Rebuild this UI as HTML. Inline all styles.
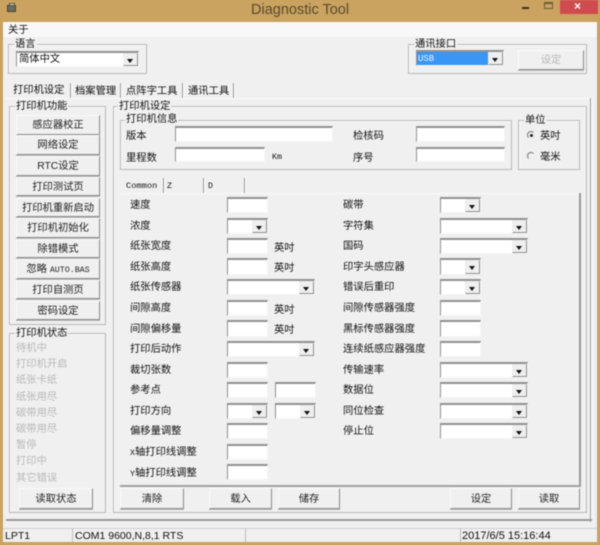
<!DOCTYPE html>
<html lang="zh"><head><meta charset="utf-8"><title>Diagnostic Tool</title>
<style>
html,body{margin:0;padding:0;width:600px;height:545px;overflow:hidden;background:#c9a35f}
#w{position:relative;width:600px;height:545px;overflow:hidden;filter:blur(.5px);font-family:"Liberation Sans","WenQuanYi Zen Hei","Noto Sans CJK SC",sans-serif;font-size:10.3px;color:#111}
#w div{position:absolute;box-sizing:border-box}
.t{white-space:nowrap;line-height:14px;height:14px;margin-top:1px}
.g{border:1px solid #b8b8b8;box-shadow:inset 1px 1px 0 #fafafa}
.l{background:#f0f0f0;padding:1px 1px 0;white-space:nowrap;line-height:14px;height:15px}
.b{background:#f0f0f0;border:1px solid;border-color:#fbfbfb #8a8a8a #8a8a8a #fbfbfb;text-align:center;box-shadow:0 1px 0 #b8b8b8;white-space:nowrap;color:#222;padding-top:2px}
.i{background:#fff;border-top:2px solid #909090;border-left:1px solid #909090;border-right:1px solid #f6f6f6;border-bottom:1px solid #f6f6f6}
.a{right:0;top:0;width:15px;height:100%;background:#efefef;border:1px solid;border-color:#eee #8f8f8f #8f8f8f #eee}
.a:after{content:"";position:absolute;left:3px;top:5px;border-left:3.5px solid transparent;border-right:3.5px solid transparent;border-top:4px solid #111}
#w .d{color:#b8b8b8}
.m{font-family:"Liberation Mono","WenQuanYi Zen Hei",monospace;font-size:8.3px}
.sp{width:2px;height:16px;background:linear-gradient(90deg,#999 50%,#fff 50%)}
</style></head><body><div id="w">
<div style="left:0;top:0;width:600px;height:545px;background:#c9a35f"></div>
<div style="left:3px;top:22px;width:594px;height:520px;background:#f0f0f0"></div>
<div style="left:3px;top:22px;width:594px;height:15px;background:#f8f8f8"></div>
<div class="t" style="left:251px;top:1px;font-size:14.5px;height:17px;line-height:17px;color:#5a4a30">Diagnostic Tool</div>
<div style="left:7px;top:5px;width:9px;height:7px;background:#6b6b60;border:1px solid #443"></div>
<div style="left:9px;top:3px;width:6px;height:3px;background:#ddd;border:1px solid #554"></div>
<div style="left:522px;top:7px;width:7px;height:2px;background:#3b3020"></div>
<div style="left:544px;top:2px;width:9px;height:7px;border:1px solid #6e5a38;border-top-width:2px"></div>
<div style="left:560px;top:0;width:38px;height:14px;background:#cf4b4f"></div>
<div class="t" style="left:574px;top:-2px;color:#fff;font-weight:bold;font-size:12px">×</div>
<div class="t" style="left:8px;top:23px">关于</div>

<div class="g" style="left:8px;top:44px;width:139px;height:30px"></div>
<div class="l" style="left:14px;top:37px">语言</div>
<div class="i" style="left:16px;top:51px;width:123px;height:16px"><div class="a"></div></div>
<div class="t" style="left:19px;top:52px">简体中文</div>

<div class="g" style="left:408px;top:44px;width:179px;height:30px"></div>
<div class="l" style="left:414px;top:37px">通讯接口</div>
<div class="i" style="left:416px;top:50px;width:88px;height:16px;background:#3a96f5"><div class="a"></div></div>
<div class="t m" style="left:418px;top:51px;color:#e8f3ff;font-size:9px">USB</div>
<div class="b d" style="left:518px;top:50px;width:66px;height:20px;line-height:16px">设定</div>

<div class="t" style="left:13px;top:83px">打印机设定</div>
<div class="sp" style="left:70px;top:83px"></div>
<div class="t" style="left:75px;top:84px">档案管理</div>
<div class="sp" style="left:120px;top:83px"></div>
<div class="t" style="left:126px;top:84px">点阵字工具</div>
<div class="sp" style="left:182px;top:83px"></div>
<div class="t" style="left:188px;top:84px">通讯工具</div>
<div class="sp" style="left:233px;top:83px"></div>

<div style="left:590px;top:98px;width:2px;height:424px;background:linear-gradient(90deg,#999 50%,#fff 50%)"></div>
<div style="left:6px;top:519px;width:586px;height:2px;background:#999"></div>
<div style="left:6px;top:98px;width:584px;height:1px;background:#fbfbfb"></div>

<div class="g" style="left:9px;top:106px;width:97px;height:219px"></div>
<div class="l" style="left:15px;top:99px">打印机功能</div>
<div class="b" style="left:16px;top:115px;width:84px;height:20px;line-height:16px">感应器校正</div>
<div class="b" style="left:16px;top:135px;width:84px;height:20px;line-height:16px">网络设定</div>
<div class="b" style="left:16px;top:156px;width:84px;height:20px;line-height:16px">RTC设定</div>
<div class="b" style="left:16px;top:177px;width:84px;height:19px;line-height:15px">打印测试页</div>
<div class="b" style="left:16px;top:198px;width:84px;height:19px;line-height:15px">打印机重新启动</div>
<div class="b" style="left:16px;top:218px;width:84px;height:20px;line-height:16px">打印机初始化</div>
<div class="b" style="left:16px;top:239px;width:84px;height:19px;line-height:15px">除错模式</div>
<div class="b" style="left:16px;top:259px;width:84px;height:20px;line-height:16px">忽略 <span class="m">AUTO.BAS</span></div>
<div class="b" style="left:16px;top:280px;width:84px;height:19px;line-height:15px">打印自测页</div>
<div class="b" style="left:16px;top:301px;width:84px;height:19px;line-height:15px">密码设定</div>

<div class="g" style="left:9px;top:333px;width:97px;height:180px"></div>
<div class="l" style="left:15px;top:326px">打印机状态</div>
<div class="t d" style="left:16px;top:341px">待机中</div>
<div class="t d" style="left:16px;top:357px">打印机开启</div>
<div class="t d" style="left:16px;top:373px">纸张卡纸</div>
<div class="t d" style="left:16px;top:390px">纸张用尽</div>
<div class="t d" style="left:16px;top:406px">碳带用尽</div>
<div class="t d" style="left:16px;top:422px">碳带用尽</div>
<div class="t d" style="left:16px;top:438px">暂停</div>
<div class="t d" style="left:16px;top:454px">打印中</div>
<div class="t d" style="left:16px;top:471px">其它错误</div>
<div class="b" style="left:19px;top:488px;width:74px;height:21px;line-height:17px">读取状态</div>

<div class="g" style="left:113px;top:106px;width:474px;height:407px"></div>
<div class="l" style="left:118px;top:99px">打印机设定</div>

<div class="g" style="left:120px;top:120px;width:392px;height:50px"></div>
<div class="l" style="left:125px;top:112px">打印机信息</div>
<div class="t" style="left:126px;top:129px">版本</div>
<div class="i" style="left:175px;top:126px;width:158px;height:16px"></div>
<div class="t" style="left:126px;top:151px">里程数</div>
<div class="i" style="left:175px;top:147px;width:90px;height:15px"></div>
<div class="t m" style="left:272px;top:150px">Km</div>
<div class="t" style="left:353px;top:129px">检核码</div>
<div class="i" style="left:416px;top:126px;width:89px;height:16px"></div>
<div class="t" style="left:353px;top:151px">序号</div>
<div class="i" style="left:416px;top:147px;width:89px;height:15px"></div>

<div class="g" style="left:518px;top:120px;width:62px;height:50px"></div>
<div class="l" style="left:524px;top:113px">单位</div>
<div style="left:527px;top:131px;width:8px;height:8px;border-radius:50%;border:1px solid #888;border-color:#777 #eee #eee #777"></div>
<div style="left:530px;top:134px;width:3px;height:3px;border-radius:50%;background:#222"></div>
<div class="t" style="left:540px;top:129px">英吋</div>
<div style="left:527px;top:152px;width:8px;height:8px;border-radius:50%;border:1px solid #888;border-color:#777 #eee #eee #777"></div>
<div class="t" style="left:540px;top:150px">毫米</div>

<div class="t m" style="left:126px;top:178px;font-size:8.7px">Common</div>
<div class="sp" style="left:163px;top:178px"></div>
<div class="t m" style="left:167px;top:179px">Z</div>
<div class="sp" style="left:203px;top:178px"></div>
<div class="t m" style="left:208px;top:179px">D</div>
<div class="sp" style="left:244px;top:178px"></div>
<div style="left:120px;top:193px;width:461px;height:1px;background:#fbfbfb"></div>
<div style="left:579px;top:193px;width:2px;height:294px;background:#999"></div>
<div style="left:120px;top:485px;width:461px;height:2px;background:#a0a0a0"></div>

<div class="t" style="left:130px;top:198px">速度</div><div class="i" style="left:227px;top:197px;width:41px;height:16px"></div>
<div class="t" style="left:130px;top:219px">浓度</div><div class="i" style="left:227px;top:218px;width:41px;height:16px"><div class="a"></div></div>
<div class="t" style="left:130px;top:239px">纸张宽度</div><div class="i" style="left:227px;top:238px;width:41px;height:16px"></div><div class="t" style="left:274px;top:241px">英吋</div>
<div class="t" style="left:130px;top:260px">纸张高度</div><div class="i" style="left:227px;top:258px;width:41px;height:17px"></div><div class="t" style="left:274px;top:261px">英吋</div>
<div class="t" style="left:130px;top:280px">纸张传感器</div><div class="i" style="left:227px;top:279px;width:88px;height:16px"><div class="a"></div></div>
<div class="t" style="left:130px;top:301px">间隙高度</div><div class="i" style="left:227px;top:300px;width:41px;height:16px"></div><div class="t" style="left:274px;top:303px">英吋</div>
<div class="t" style="left:130px;top:322px">间隙偏移量</div><div class="i" style="left:227px;top:320px;width:41px;height:17px"></div><div class="t" style="left:274px;top:323px">英吋</div>
<div class="t" style="left:130px;top:342px">打印后动作</div><div class="i" style="left:227px;top:341px;width:88px;height:16px"><div class="a"></div></div>
<div class="t" style="left:130px;top:363px">裁切张数</div><div class="i" style="left:227px;top:362px;width:41px;height:16px"></div>
<div class="t" style="left:130px;top:383px">参考点</div><div class="i" style="left:227px;top:382px;width:41px;height:16px"></div><div class="i" style="left:275px;top:382px;width:41px;height:16px"></div>
<div class="t" style="left:130px;top:404px">打印方向</div><div class="i" style="left:227px;top:403px;width:41px;height:16px"><div class="a"></div></div><div class="i" style="left:275px;top:403px;width:41px;height:16px"><div class="a"></div></div>
<div class="t" style="left:130px;top:424px">偏移量调整</div><div class="i" style="left:227px;top:423px;width:41px;height:16px"></div>
<div class="t" style="left:130px;top:445px"><span class="m">X</span>轴打印线调整</div><div class="i" style="left:227px;top:444px;width:41px;height:16px"></div>
<div class="t" style="left:130px;top:466px"><span class="m">Y</span>轴打印线调整</div><div class="i" style="left:227px;top:464px;width:41px;height:16px"></div>

<div class="t" style="left:343px;top:198px">碳带</div><div class="i" style="left:440px;top:197px;width:41px;height:16px"><div class="a"></div></div>
<div class="t" style="left:343px;top:219px">字符集</div><div class="i" style="left:440px;top:218px;width:88px;height:16px"><div class="a"></div></div>
<div class="t" style="left:343px;top:239px">国码</div><div class="i" style="left:440px;top:238px;width:88px;height:16px"><div class="a"></div></div>
<div class="t" style="left:343px;top:260px">印字头感应器</div><div class="i" style="left:440px;top:258px;width:41px;height:17px"><div class="a"></div></div>
<div class="t" style="left:343px;top:280px">错误后重印</div><div class="i" style="left:440px;top:279px;width:41px;height:16px"><div class="a"></div></div>
<div class="t" style="left:343px;top:301px">间隙传感器强度</div><div class="i" style="left:440px;top:300px;width:41px;height:16px"></div>
<div class="t" style="left:343px;top:322px">黑标传感器强度</div><div class="i" style="left:440px;top:320px;width:41px;height:17px"></div>
<div class="t" style="left:343px;top:342px">连续纸感应器强度</div><div class="i" style="left:440px;top:341px;width:41px;height:16px"></div>
<div class="t" style="left:343px;top:363px">传输速率</div><div class="i" style="left:440px;top:362px;width:88px;height:16px"><div class="a"></div></div>
<div class="t" style="left:343px;top:383px">数据位</div><div class="i" style="left:440px;top:382px;width:88px;height:16px"><div class="a"></div></div>
<div class="t" style="left:343px;top:404px">同位检查</div><div class="i" style="left:440px;top:403px;width:88px;height:16px"><div class="a"></div></div>
<div class="t" style="left:343px;top:424px">停止位</div><div class="i" style="left:440px;top:423px;width:88px;height:16px"><div class="a"></div></div>

<div class="b" style="left:120px;top:488px;width:64px;height:21px;line-height:17px">清除</div>
<div class="b" style="left:209px;top:488px;width:63px;height:21px;line-height:17px">载入</div>
<div class="b" style="left:278px;top:488px;width:62px;height:21px;line-height:17px">储存</div>
<div class="b" style="left:450px;top:488px;width:62px;height:21px;line-height:17px">设定</div>
<div class="b" style="left:518px;top:488px;width:62px;height:21px;line-height:17px">读取</div>

<div style="left:3px;top:528px;width:594px;height:1px;background:#cfcfcf"></div>
<div style="left:72px;top:528px;width:1px;height:14px;background:#bdbdbd"></div>
<div style="left:245px;top:528px;width:1px;height:14px;background:#bdbdbd"></div>
<div style="left:460px;top:528px;width:1px;height:14px;background:#bdbdbd"></div>
<div class="t" style="left:5px;top:528px;font-size:10.5px">LPT1</div>
<div class="t" style="left:75px;top:528px;font-size:10.5px">COM1 9600,N,8,1 RTS</div>
<div class="t" style="left:462px;top:528px;font-size:11px">2017/6/5 15:16:44</div>
</div></body></html>
